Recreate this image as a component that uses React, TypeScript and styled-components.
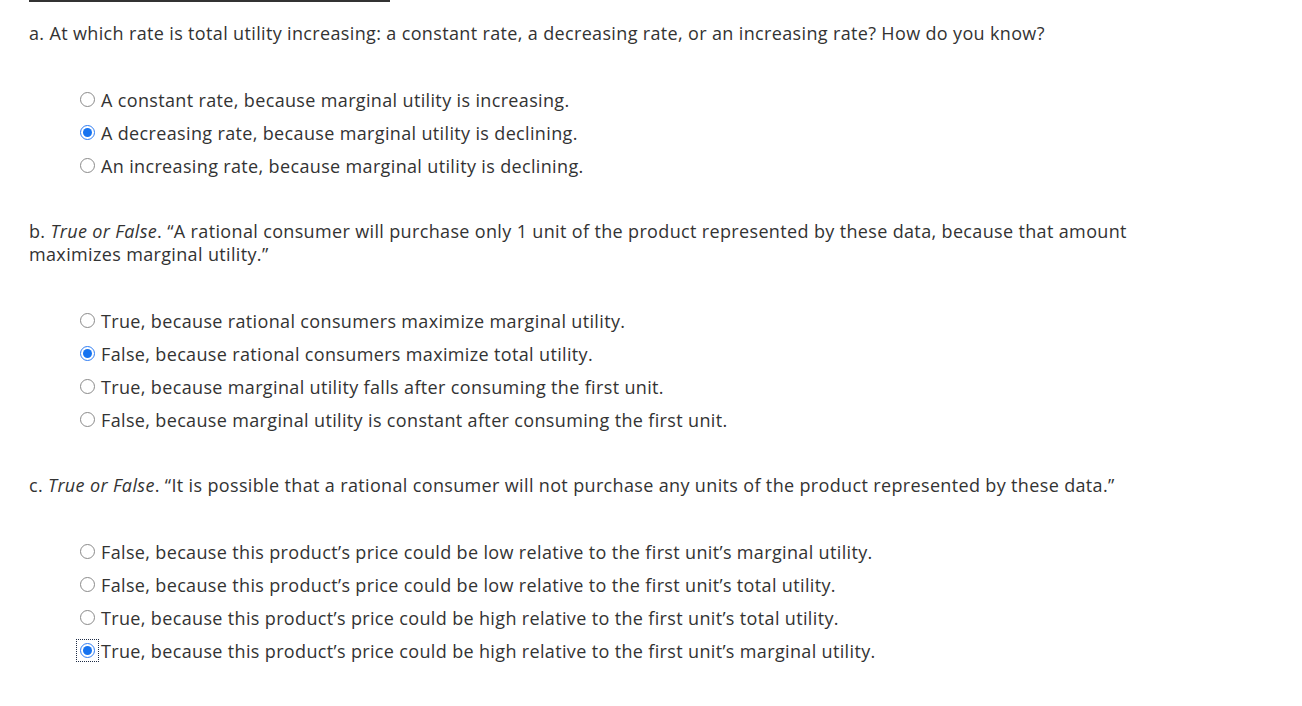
import React from "react";
import styled, { createGlobalStyle } from "styled-components";

const Global = createGlobalStyle`
  html, body { margin: 0; padding: 0; background: #fff; }
  body { font-family: "Open Sans", "Liberation Sans", sans-serif; color: #333; }
`;

const Page = styled.div`
  padding: 0 29px;
  width: 1302px;
  box-sizing: border-box;
`;

const TopRule = styled.div`
  width: 361px;
  height: 2px;
  background: #333;
`;

const Question = styled.p`
  margin: 20px 0 0;
  font-size: 18px;
  letter-spacing: 0.35px;
  line-height: 23px;
  max-width: 1110px;
`;

const Options = styled.div`
  display: flex;
  flex-direction: column;
  padding: 38px 0 18px 47px;
`;

const Option = styled.label`
  display: flex;
  align-items: center;
  height: 33px;
  font-size: 18px;
  letter-spacing: 0.35px;
  gap: 2px;
`;

const FocusBox = styled.span<{ $focus?: boolean }>`
  display: inline-flex;
  padding: 3px;
  border: 1px dotted ${(p) => (p.$focus ? "#1d2b45" : "transparent")};
  flex: none;
`;

const Radio = styled.span<{ $checked?: boolean }>`
  width: 15px;
  height: 15px;
  box-sizing: border-box;
  border-radius: 50%;
  border: 1px solid ${(p) => (p.$checked ? "#2f7df3" : "#8a8a8a")};
  background: #fff;
  display: inline-flex;
  align-items: center;
  justify-content: center;
  &::after {
    content: "";
    width: 9px;
    height: 9px;
    border-radius: 50%;
    background: ${(p) => (p.$checked ? "#1673f0" : "transparent")};
  }
`;

type Q = { label: React.ReactNode; options: string[]; checked: number; focus?: boolean };

const questions: Q[] = [
  {
    label: <>a. At which rate is total utility increasing: a constant rate, a decreasing rate, or an increasing rate? How do you know?</>,
    options: [
      "A constant rate, because marginal utility is increasing.",
      "A decreasing rate, because marginal utility is declining.",
      "An increasing rate, because marginal utility is declining.",
    ],
    checked: 1,
  },
  {
    label: (
      <>
        b. <i>True or False</i>. “A rational consumer will purchase only 1 unit of the product represented by these data, because that amount maximizes marginal utility.”
      </>
    ),
    options: [
      "True, because rational consumers maximize marginal utility.",
      "False, because rational consumers maximize total utility.",
      "True, because marginal utility falls after consuming the first unit.",
      "False, because marginal utility is constant after consuming the first unit.",
    ],
    checked: 1,
  },
  {
    label: (
      <>
        c. <i>True or False</i>. “It is possible that a rational consumer will not purchase any units of the product represented by these data.”
      </>
    ),
    options: [
      "False, because this product’s price could be low relative to the first unit’s marginal utility.",
      "False, because this product’s price could be low relative to the first unit’s total utility.",
      "True, because this product’s price could be high relative to the first unit’s total utility.",
      "True, because this product’s price could be high relative to the first unit’s marginal utility.",
    ],
    checked: 3,
    focus: true,
  },
];

export default function App() {
  return (
    <>
      <Global />
      <Page>
        <TopRule />
        {questions.map((q, qi) => (
          <section key={qi}>
            <Question>{q.label}</Question>
            <Options>
              {q.options.map((o, oi) => (
                <Option key={oi}>
                  <FocusBox $focus={q.focus && oi === q.checked}>
                    <Radio $checked={oi === q.checked} />
                  </FocusBox>
                  {o}
                </Option>
              ))}
            </Options>
          </section>
        ))}
      </Page>
    </>
  );
}
